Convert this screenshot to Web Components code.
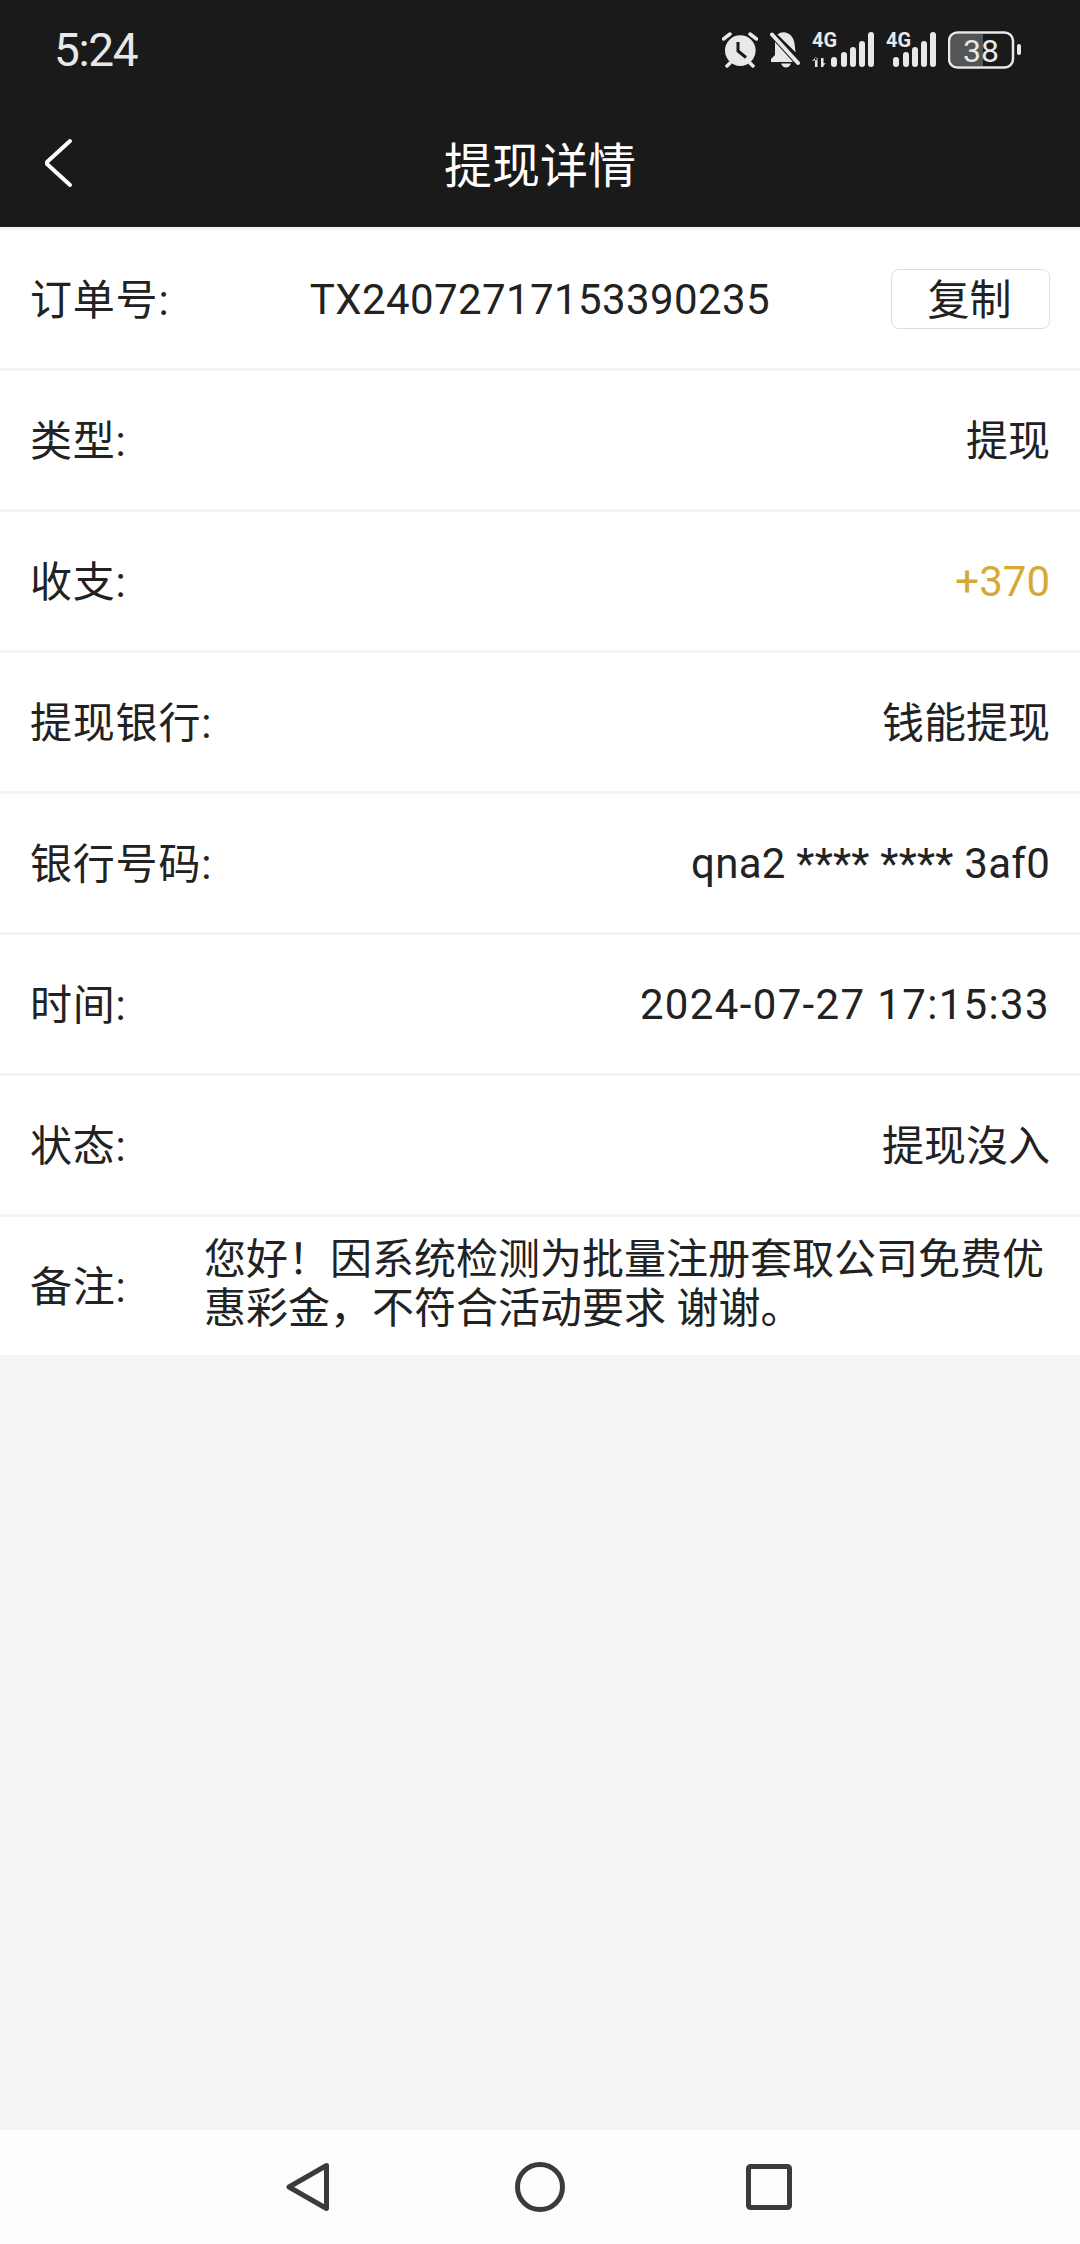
<!doctype html>
<html lang="zh">
<head>
<meta charset="utf-8">
<title>提现详情</title>
<style>
  html, body { margin: 0; background: #f4f4f4; }
  body { font-family: Roboto, "Noto Sans CJK SC", sans-serif; }
  detail-page { height: 2244px; }
</style>
</head>
<body>
<detail-page>
  <app-header slot="header" time="5:24" title="提现详情"></app-header>
  <detail-row label="订单号:">
    <span slot="center" style="letter-spacing:.4px">TX24072717153390235</span>
    <copy-button>复制</copy-button>
  </detail-row>
  <detail-row label="类型:" cjk>提现</detail-row>
  <detail-row label="收支:"><span style="color:#d6a836">+370</span></detail-row>
  <detail-row label="提现银行:" cjk>钱能提现</detail-row>
  <detail-row label="银行号码:"><span style="letter-spacing:.25px">qna2 **** **** 3af0</span></detail-row>
  <detail-row label="时间:"><span style="letter-spacing:1.35px">2024-07-27 17:15:33</span></detail-row>
  <detail-row label="状态:" cjk>提现沒入</detail-row>
  <remark-row label="备注:">您好！因系统检测为批量注册套取公司免费优惠彩金，不符合活动要求 谢谢。</remark-row>
  <nav-bar slot="footer"></nav-bar>
</detail-page>

<script>
// page shell: header on top, rows in the middle, nav pinned to the bottom
class DetailPage extends HTMLElement {
  constructor() {
    super();
    this.attachShadow({ mode: 'open' }).innerHTML = `
      <style>
        :host { display: flex; flex-direction: column; background: #f4f4f4; }
        main { flex: 1; }
      </style>
      <slot name="header"></slot>
      <main><slot></slot></main>
      <slot name="footer"></slot>`;
  }
}

class AppHeader extends HTMLElement {
  constructor() {
    super();
    this.attachShadow({ mode: 'open' }).innerHTML = `
      <style>
        :host { display: block; height: 227px; background: #1a1a1a; color: #fff; }
        .status { height: 100px; display: flex; align-items: center; padding: 0 58px 0 54px; gap: 12px; }
        .time { font-size: 46px; color: #e8e8e8; flex: 1; letter-spacing: -1.4px; }
        .bar { height: 127px; display: grid; grid-template-columns: 1fr auto 1fr; align-items: center; }
        .bar svg { margin: -2px 0 0 43px; display: block; }
        h1 { margin: -4px 0 0; font-size: 48px; font-weight: 400; }
        svg { display: block; fill: #e8e8e8; }
        svg text { font-family: Roboto, sans-serif; }
      </style>
      <div class="status">
        <span class="time">${this.getAttribute('time')}</span>
        <svg width="36" height="36" viewBox="0 0 36 36">
          <circle cx="18.300" cy="18.600" r="15.300"/>
          <path d="M1.500 7L8 2M28 2l6.500 5M5 34l3-3M31 34l-3-3" stroke="#e8e8e8" stroke-width="3.500" stroke-linecap="round" fill="none"/>
          <path d="M16 10v9l8 6.500" stroke="#1a1a1a" stroke-width="3" fill="none"/>
        </svg>
        <svg width="30" height="36" viewBox="0 0 30 36">
          <path d="M7.500 2.500C9.500 1 11 .3 13.500 .3c6 0 10 5 11 11l1 9z"/>
          <path d="M5 10L23 30H1v-3l4-4z"/>
          <path d="M11 31.500h10c-1 2.500-3 4-5 4s-4-1.500-5-4z"/>
          <path d="M2 2.500L28 31" stroke="#e8e8e8" stroke-width="4" stroke-linecap="round" fill="none"/>
        </svg>
        <svg width="62" height="52" viewBox="0 -8 62 52">
          <text x="0" y="15" font-size="21" font-weight="700" textLength="25" lengthAdjust="spacingAndGlyphs">4G</text>
          <path d="M3 26v9h2.500v-9zM0 29l4-4 1 3zM9 35v-9h2.500v9zM14 31l-4 4-1-3z"/>
          <rect x="19" y="25" width="6" height="10" rx="3"/>
          <rect x="29" y="20" width="6" height="15" rx="3"/>
          <rect x="38" y="15" width="6" height="20" rx="3"/>
          <rect x="47" y="9" width="6" height="26" rx="3"/>
          <rect x="56" y="0" width="6" height="35" rx="3"/>
        </svg>
        <svg width="50" height="52" viewBox="0 -8 50 52">
          <text x="0" y="15" font-size="21" font-weight="700" textLength="25" lengthAdjust="spacingAndGlyphs">4G</text>
          <rect x="7" y="25" width="6" height="10" rx="3"/>
          <rect x="17" y="20" width="6" height="15" rx="3"/>
          <rect x="26" y="15" width="6" height="20" rx="3"/>
          <rect x="35" y="9" width="6" height="26" rx="3"/>
          <rect x="44" y="0" width="6" height="35" rx="3"/>
        </svg>
        <svg width="74" height="38" viewBox="0 0 74 38">
          <path d="M10 3h25v32H10a8 8 0 0 1-8-8V11a8 8 0 0 1 8-8z" fill="#555"/>
          <rect x="1" y="1.500" width="64" height="35" rx="8.500" fill="none" stroke="#e8e8e8" stroke-width="2.500"/>
          <text x="33" y="31" font-size="32" text-anchor="middle">38</text>
          <rect x="69" y="13" width="4" height="11" rx="2"/>
        </svg>
      </div>
      <div class="bar">
        <svg width="30" height="50" viewBox="0 0 30 50"><path d="M27 3L4 24l0 2 23 21" fill="none" stroke="#fff" stroke-width="4" stroke-linecap="round" stroke-linejoin="round"/></svg>
        <h1>${this.getAttribute('title')}</h1>
      </div>`;
  }
}

// label on the left, optional centred text, value on the right
class DetailRow extends HTMLElement {
  constructor() {
    super();
    this.attachShadow({ mode: 'open' }).innerHTML = `
      <style>
        :host { display: grid; grid-template-columns: 1fr auto 1fr; align-items: center; height: 138px; padding: 0 30px;
          background: #fff; border-top: 3px solid #f4f4f4; color: #222; font-size: 42px; white-space: nowrap; }
        .label { padding-bottom: 5px; letter-spacing: .8px; }
        .end { grid-column: 3; justify-self: end; display: flex; align-items: center; }
        :host([cjk]) .end { padding-bottom: 5px; }
      </style>
      <span class="label">${this.getAttribute('label')}</span>
      <div><slot name="center"></slot></div>
      <div class="end"><slot></slot></div>`;
  }
}

class RemarkRow extends HTMLElement {
  constructor() {
    super();
    this.attachShadow({ mode: 'open' }).innerHTML = `
      <style>
        :host { display: flex; align-items: center; height: 138px; padding: 0 30px;
          background: #fff; border-top: 3px solid #f4f4f4; color: #222; font-size: 42px; }
        .label { width: 174px; flex: none; padding-bottom: 5px; letter-spacing: .8px; }
        .text { flex: 1; line-height: 49px; margin-top: -4px; }
      </style>
      <span class="label">${this.getAttribute('label')}</span>
      <div class="text"><slot></slot></div>`;
  }
}

class CopyButton extends HTMLElement {
  constructor() {
    super();
    this.attachShadow({ mode: 'open' }).innerHTML = `
      <style>
        :host { display: flex; align-items: center; justify-content: center; box-sizing: border-box; width: 159px; height: 60px;
          border: 1px solid #ddd; border-radius: 8px; font-size: 42px; color: #222; background: #fff; padding: 0 2px 5px 0; }
      </style>
      <slot></slot>`;
  }
}

class NavBar extends HTMLElement {
  constructor() {
    super();
    this.attachShadow({ mode: 'open' }).innerHTML = `
      <style>
        :host { display: flex; justify-content: center; align-items: center; height: 114px; background: #fdfdfd; gap: 185px; padding-right: 3px; }
        svg { display: block; fill: none; stroke: #3b3b3b; stroke-width: 5; stroke-linejoin: round; }
        svg:last-child { margin-left: -4px; }
        svg:first-child { margin-right: -1px; }
      </style>
      <svg width="44" height="50" viewBox="0 0 44 50"><path d="M40.500 3.500L3 25l37.500 21.500z"/></svg>
      <svg width="50" height="50" viewBox="0 0 50 50"><circle cx="25" cy="25" r="22.500"/></svg>
      <svg width="46" height="46" viewBox="0 0 46 46"><rect x="2.500" y="2.500" width="41" height="41" rx="2"/></svg>`;
  }
}

customElements.define('detail-page', DetailPage);
customElements.define('app-header', AppHeader);
customElements.define('detail-row', DetailRow);
customElements.define('remark-row', RemarkRow);
customElements.define('copy-button', CopyButton);
customElements.define('nav-bar', NavBar);
</script>
</body>
</html>
